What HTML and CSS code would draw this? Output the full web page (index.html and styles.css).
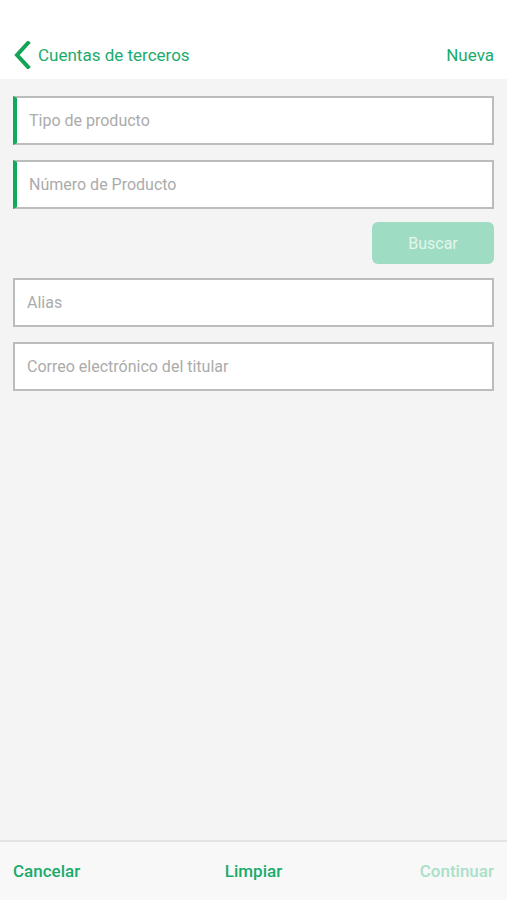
FILE: index.html
```html
<!DOCTYPE html>
<html lang="es">

<head>
    <meta charset="UTF-8">
    <meta name="viewport" content="width=device-width, initial-scale=1.0">
    <title>Cuentas de terceros</title>
    <link rel="stylesheet" href="styles.css">
</head>

<body>
    <div class="page">
        <div class="header">
            <div class="back">
                <svg class="chevron" width="18" height="28" viewBox="0 0 18 28">
                    <path d="M15 2 L4 14 L15 26" fill="none" stroke="#13a457" stroke-width="4" stroke-linecap="square"/>
                </svg>
                <span class="title">Cuentas de terceros</span>
            </div>
            <span class="new">Nueva</span>
        </div>

        <div class="content">
            <div class="field required">Tipo de producto</div>
            <div class="field required">Número de Producto</div>
            <div class="actions">
                <button class="btn">Buscar</button>
            </div>
            <div class="field">Alias</div>
            <div class="field">Correo electrónico del titular</div>
        </div>

        <div class="footer">
            <span class="link left">Cancelar</span>
            <span class="link">Limpiar</span>
            <span class="link right disabled">Continuar</span>
        </div>
    </div>
</body>

</html>
```

FILE: styles.css
```css
html, body {
    height: 100%;
    margin: 0;
}
body {
    font-family: Roboto, "Noto Sans", sans-serif;
    background-color: #fff;
}
.page {
    height: 900px;
    display: flex;
    flex-direction: column;
}

.header {
    height: 49px;
    padding: 30px 13px 0 13px;
    display: flex;
    align-items: center;
    justify-content: space-between;
    background-color: #fff;
}
.back {
    display: flex;
    align-items: center;
}
.chevron {
    margin-right: 7px;
}
.title, .new {
    font-size: 17px;
    color: #1bab6c;
}

.content {
    flex: 1;
    background-color: #f4f4f4;
    padding: 17px 13px 0 13px;
}
.field {
    height: 45px;
    background-color: #fff;
    border: 2px solid #bcbcbc;
    margin-bottom: 15px;
    padding-left: 12px;
    display: flex;
    align-items: center;
    font-size: 16px;
    color: #ababab;
}
.field.required {
    border-left: 4px solid #13a95a;
    padding-left: 12px;
}
.actions {
    display: flex;
    justify-content: flex-end;
    margin: -2px 0 14px 0;
}
.btn {
    width: 122px;
    height: 42px;
    border: none;
    border-radius: 6px;
    background-color: #9edcc3;
    color: #e4f6ee;
    font-family: Roboto, "Noto Sans", sans-serif;
    font-size: 16px;
}

.footer {
    height: 58px;
    border-top: 2px solid #e4e4e4;
    background-color: #f8f8f8;
    padding: 0 13px;
    display: grid;
    grid-template-columns: 1fr auto 1fr;
    align-items: center;
}
.link {
    font-size: 17px;
    font-weight: 500;
    color: #1aab6c;
}
.link.left {
    justify-self: start;
}
.link.right {
    justify-self: end;
}
.link.disabled {
    color: #a8e0c8;
}
```
